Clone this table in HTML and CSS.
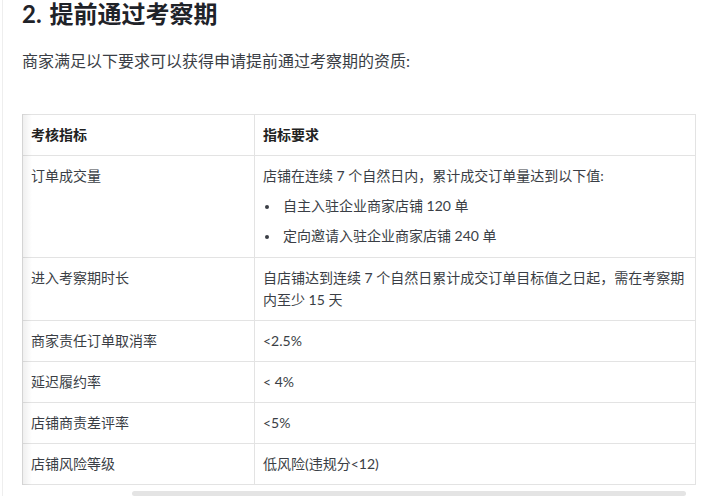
FILE: index.html
```html
<!DOCTYPE html>
<html lang="zh-CN">
<head>
<meta charset="utf-8">
<link rel="stylesheet" href="styles.css">
</head>
<body>
<div class="page">
  <h2 class="title">2. 提前通过考察期</h2>
  <p class="intro">商家满足以下要求可以获得申请提前通过考察期的资质:</p>
  <div class="scroll">
    <table class="req">
      <thead>
        <tr><th class="c1">考核指标</th><th>指标要求</th></tr>
      </thead>
      <tbody>
        <tr>
          <td>订单成交量</td>
          <td>
            <p class="cell-p">店铺在连续 7 个自然日内，累计成交订单量达到以下值:</p>
            <ul class="cell-list">
              <li>自主入驻企业商家店铺 120 单</li>
              <li>定向邀请入驻企业商家店铺 240 单</li>
            </ul>
          </td>
        </tr>
        <tr><td>进入考察期时长</td><td>自店铺达到连续 7 个自然日累计成交订单目标值之日起，需在考察期内至少 15 天</td></tr>
        <tr><td>商家责任订单取消率</td><td>&lt;2.5%</td></tr>
        <tr><td>延迟履约率</td><td>&lt; 4%</td></tr>
        <tr><td>店铺商责差评率</td><td>&lt;5%</td></tr>
        <tr><td>店铺风险等级</td><td>低风险(违规分&lt;12)</td></tr>
      </tbody>
    </table>
    <div class="shade"></div>
  </div>
  <div class="bar"></div>
</div>
</body>
</html>
```
FILE: styles.css
```css
html, body {
  margin: 0;
  padding: 0;
  background: #fff;
}
body {
  font-family: "Lato", "Noto Sans CJK SC", sans-serif;
  color: #333;
}
.page {
  margin-left: 2px;
  border-left: 1px solid #eeeeee;
  padding-left: 19px;
  min-height: 496px;
  box-sizing: border-box;
}
.title {
  margin: 0;
  font-size: 24px;
  line-height: 28px;
  font-weight: 700;
  color: #1f2329;
  word-spacing: 2px;
}
.intro {
  margin: 21px 0 0;
  font-size: 16px;
  line-height: 24px;
  color: #3a3e45;
}
.scroll {
  position: relative;
  margin-top: 41px;
  width: 675px;
}
.req {
  border-collapse: collapse;
  width: 674px;
  font-size: 14px;
  line-height: 22px;
  color: #3a3e45;
}
.req th, .req td {
  border: 1px solid #e3e3e3;
  padding: 9px 8px;
  text-align: left;
  vertical-align: top;
}
.req th {
  font-weight: 700;
  color: #222;
}
.req .c1 {
  width: 215px;
}
.cell-p {
  margin: 0;
}
.cell-list {
  margin: 0;
  padding: 0 0 1px 0;
  list-style: none;
}
.cell-list li {
  margin-top: 8px;
}
.cell-list li::before {
  content: "";
  display: inline-block;
  width: 4px;
  height: 4px;
  border-radius: 50%;
  background: #3a3e45;
  margin: 0 14px 0 2px;
  vertical-align: middle;
}
.shade {
  position: absolute;
  left: 0;
  top: 0;
  bottom: 0;
  width: 10px;
  background: linear-gradient(to right, rgba(0,0,0,0.07), rgba(0,0,0,0));
  pointer-events: none;
}
.bar {
  margin: 6px 0 0 110px;
  width: 554px;
  height: 5px;
  border-radius: 3px;
  background: #e4e4e4;
}
```
